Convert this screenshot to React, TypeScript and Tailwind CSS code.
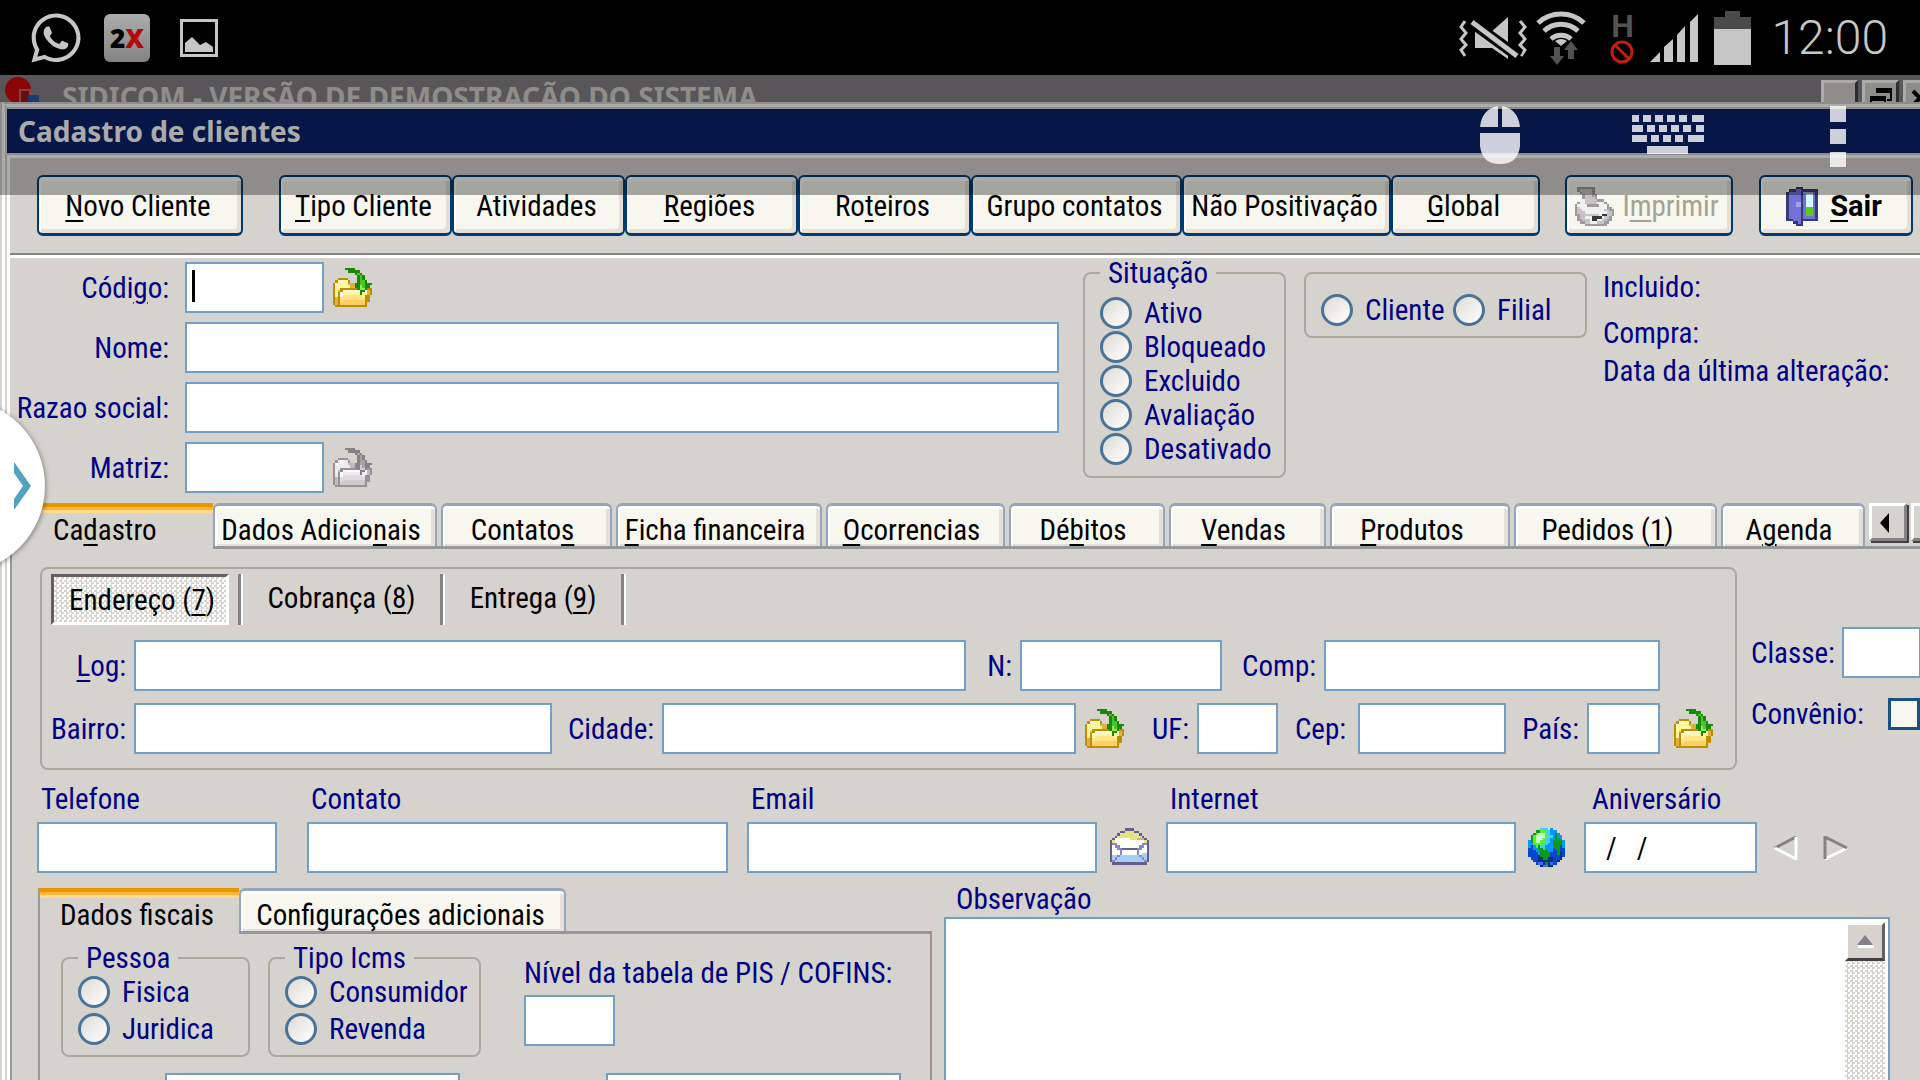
import type { ReactNode } from 'react';
import { FaWhatsapp } from 'react-icons/fa';

const navy = 'text-[#000084]';

const palettes: Record<string, Record<string, string>> = {
  folder: { B: '#bd8e00', y: '#fff79c', o: '#e0b040', w: '#fffbe7', Y: '#ffe384', O: '#ffcf63', G: '#188a08', g: '#4ac32a', L: '#8ceb5a' },
  folderGray: { B: '#949294', y: '#efebef', o: '#bdbabd', w: '#fffbff', Y: '#dedbde', O: '#cecbce', G: '#848284', g: '#a5a2a5', L: '#ceced6' },
  envelope: { P: '#63618c', y: '#e7e384', w: '#fffffa', r: '#d6ae8c', v: '#8c86c6', b: '#a5cff7' },
  globe: { c: '#42cff7', L: '#c6ffc6', G: '#5aef31', g: '#089a18', b: '#0896ef', B: '#0845ce', n: '#00308c', v: '#4a69ff' },
  printer: { s: '#9c9a9c', g: '#c6c3c6', w: '#efefef', k: '#393839' },
  door: { D: '#39387b', v: '#7371d6', c: '#d6fbff', w: '#a5a2e7', e: '#5acb21' },
};

const folderRows = [
  '.....GGGG.......',
  '......GGGGG.....',
  '.........GgG....',
  '..........GgG...',
  '..BBBB....GgG...',
  '.BywyyB...GggG..',
  'BwyyyyoooGGggGGG',
  'ByyyyyyooGGLgGG.',
  'ByyBBBBBBBGLLGBB',
  'ByoBwwwwwwwGGwoB',
  'ByBwyyyyyyyGyyoB',
  'ByBwYYYYYYYYyBB.',
  'BoBYYYYYYYYYYBB.',
  'BoBYOOOOOOOOOBB.',
  'BoBOOOOOOOOOOB..',
  '.BBBBBBBBBBBBB..',
];

const envelopeRows = [
  '......PPPP......',
  '....PPyyyyPP....',
  '...PyyyyyyyyP...',
  '..PyyyyyyyyyyP..',
  '.PwwwwwwyyyrrrP.',
  'PywwwwwwwwwwwwyP',
  'PvvwwwwwwwwwwvvP',
  'PwvvwwwwwwwwvvwP',
  'PwwvvPPPPPPvvwwP',
  'PwwwvwwwwwwvwwwP',
  'PwwwvwwwwwwvwbbP',
  'PbbvbbbbbbbbvbbP',
  'PbvbbbbbbbbbbvbP',
  'PvbbbbbbbbbbbbvP',
  '.PPPPPPPPPPPPPP.',
];

const globeRows = [
  '.....cccLb.....',
  '...ggGGccbbb...',
  '..gGLLLGcbbgb..',
  '.gGLLLLGccbgbb.',
  '.gGLLLGccbbggb.',
  'bgGLLGGccbggggb',
  'bbGGGGccbbggggb',
  'bBbGgccbbbgggBb',
  'BBbbggcbbbBggBB',
  'BBBbbgggbbBBgBB',
  'BBBBbggggBBBgnB',
  'BBBBnggggBBBBnB',
  '.BBBnnggnnBBBn.',
  '..BBnnnnnnBBn..',
  '...BvvngnvBB...',
  '.....nvvnn.....',
];

const printerRows = [
  '.sssssss........',
  '.sgggggs........',
  '..sggggs........',
  '...sgggss.......',
  '...sggggs.......',
  '..wwgggggsss....',
  '.swwgggggwwws...',
  'swwwwssssswwws..',
  'sgwwwwwwwwwwwss.',
  'sggwwwwwwwwwggss',
  'sgggwwwwwwwwwggs',
  'ssggggggggwkkggs',
  '.sggwwwkkkkwggs.',
  '.ssgggwkkwwggss.',
  '..ssggwwwgggss..',
  '....sssssssss...',
];

const doorRows = [
  '....DDD......',
  '.DDDvvDDDDDDD',
  'DvvvvvDwwwwvD',
  'DvvvvvDvcccvD',
  'DvvvvvDvcccvD',
  'DvvvvvDvcccvD',
  'DvvvwwDvcccvD',
  'DvvvwwDvcccvD',
  'DvvvvvDveeevD',
  'DvvvvvDveeevD',
  'DvvvvvDveeevD',
  'DvvvvvDveeevD',
  'DvvvvvDvvvvvD',
  'DDDvvvDDDDDDD',
  '...DDvD......',
  '....DDD......',
];

function PixelIcon({ rows, palette, className }: { rows: string[]; palette: string; className: string }) {
  return (
    <svg viewBox={`0 0 ${rows[0].length} ${rows.length}`} className={className} shapeRendering="crispEdges" aria-hidden="true">
      {rows.map((row, y) =>
        row.split('').map((c, x) =>
          c === '.' ? null : <rect key={`${x}-${y}`} x={x} y={y} width="1" height="1" fill={palettes[palette][c]} />
        )
      )}
    </svg>
  );
}

/** Text with one letter marked as its keyboard shortcut: "&Novo" underlines the N. */
function Mnemonic({ text }: { text: string }) {
  const i = text.indexOf('&');
  if (i < 0) return <span>{text}</span>;
  return (
    <span className="whitespace-pre">
      {text.slice(0, i)}
      <u className="decoration-2 underline-offset-4">{text[i + 1]}</u>
      {text.slice(i + 2)}
    </span>
  );
}

function TextInput({ id, className, value }: { id: string; className: string; value?: string }) {
  return (
    <input
      id={id}
      type="text"
      defaultValue={value}
      className={`h-[51px] min-w-0 border-2 border-[#739ec6] bg-white text-black outline-none ${className}`}
    />
  );
}

function Label({ htmlFor, className, text }: { htmlFor: string; className: string; text: string }) {
  return (
    <label htmlFor={htmlFor} className={`shrink-0 whitespace-nowrap ${navy} ${className}`}>
      <Mnemonic text={text} />
    </label>
  );
}

function FolderButton({ title, gray, className }: { title: string; gray?: boolean; className: string }) {
  return (
    <button type="button" aria-label={title} disabled={gray} className={`shrink-0 ${className}`}>
      <PixelIcon rows={folderRows} palette={gray ? 'folderGray' : 'folder'} className="size-[39px]" />
    </button>
  );
}

function Radio({ name, text, className }: { name: string; text: string; className: string }) {
  return (
    <label className={`flex items-center gap-3 whitespace-nowrap ${navy} ${className}`}>
      <input
        type="radio"
        name={name}
        className="size-8 shrink-0 appearance-none rounded-full border-3 border-[#4a7399] bg-linear-to-br from-[#dedbd6] to-white"
      />
      {text}
    </label>
  );
}

function Group({ title, className, children }: { title?: string; className: string; children: ReactNode }) {
  return (
    <fieldset className={`rounded-lg border-2 border-[#ada99a] ${className}`}>
      {title && <legend className={`px-2 ${navy}`}>{title}</legend>}
      {children}
    </fieldset>
  );
}

function ToolButton({ className, disabled, children }: { className: string; disabled?: boolean; children: ReactNode }) {
  return (
    <button
      type="button"
      disabled={disabled}
      className={`flex h-[61px] shrink-0 items-center justify-center rounded-md border-x-2 border-t-2 border-b-3 border-[#003c74] bg-[#f7f7ef] pt-[2px] pr-1 text-black shadow-[inset_2px_4px_0_#fff,inset_-4px_-4px_0_#e7dfd6] disabled:text-[#a5a294] ${className}`}
    >
      {children}
    </button>
  );
}

function Tab({ text, className }: { text: string; className: string }) {
  return (
    <button
      type="button"
      role="tab"
      aria-selected={false}
      className={`h-[43px] shrink-0 rounded-t-md border-x-2 border-t-3 border-[#94a6bd] bg-[#f7f7ef] pt-2 text-black shadow-[inset_2px_3px_0_#fff,inset_-4px_-2px_0_#e7dfd6] ${className}`}
    >
      <Mnemonic text={text} />
    </button>
  );
}

function ActiveTab({ text, className }: { text: string; className: string }) {
  return (
    <button
      type="button"
      role="tab"
      aria-selected={true}
      className={`h-[46px] shrink-0 border-t-4 border-t-[#e79600] pt-1 text-left text-black shadow-[inset_0_3px_0_#ffb638,inset_0_6px_0_#ffdb8c] ${className}`}
    >
      <Mnemonic text={text} />
    </button>
  );
}

function StatusBar() {
  return (
    <header className="flex h-[75px] shrink-0 items-center bg-black pr-8 pl-7 text-[#c6c6c6]">
      <FaWhatsapp className="size-14" />
      <div className="ml-5 flex h-12 w-[46px] items-center justify-center rounded-md bg-linear-to-b from-[#adadad] to-[#848284] font-['Noto_Sans'] text-[26px] leading-none font-black">
        <span className="text-black">2</span>
        <span className="text-[#b50808]">X</span>
      </div>
      <svg viewBox="0 0 38 38" className="ml-[30px] size-[38px]" aria-hidden="true">
        <rect x="1.5" y="1.5" width="35" height="35" fill="none" stroke="#c6c6c6" strokeWidth="3" />
        <path d="M5 33V24l7-6 8 8 6-3 7 5v5z" fill="#c6c6c6" />
      </svg>
      <svg viewBox="0 0 69 44" className="ml-auto h-11 w-[69px]" aria-hidden="true">
        <g fill="none" stroke="#c6c6c6" strokeWidth="3">
          <path d="M6 5L2 11l5 6-5 6 5 6-5 5 4 6" />
          <path d="M61 5l5 6-5 6 5 6-5 6 5 5-4 6" />
        </g>
        <path d="M31 17l18-16v42L33 32H16V14z" fill="#c6c6c6" />
        <path d="M12 6l48 35" stroke="#000" strokeWidth="11" />
        <path d="M13 6l45 34" stroke="#c6c6c6" strokeWidth="5" />
      </svg>
      <svg viewBox="0 0 50 54" className="ml-2 h-[54px] w-[50px]" aria-hidden="true">
        <g fill="none" stroke="#c6c6c6" strokeWidth="5">
          <path d="M2 12a34 34 0 0 1 46 0" />
          <path d="M8 20a25 25 0 0 1 34 0" />
          <path d="M15 28a15 15 0 0 1 20 0" />
        </g>
        <path d="M19 30q6-4 12 0l-6 5z" fill="#c6c6c6" />
        <path d="M18 36h6v9h4l-7 9-7-9h4zM32 48h6v-9h4l-7-9-7 9h4z" fill="#525252" />
      </svg>
      <div className="ml-6 flex w-6 flex-col items-center">
        <span className="font-['Roboto'] text-[32px] leading-7 font-bold text-[#525252]">H</span>
        <svg viewBox="0 0 24 24" className="size-6" aria-hidden="true">
          <circle cx="12" cy="12" r="10" fill="none" stroke="#bd2010" strokeWidth="3" />
          <path d="M5 5l14 14" stroke="#bd2010" strokeWidth="3" />
        </svg>
      </div>
      <svg viewBox="0 0 48 48" className="ml-4 size-12" aria-hidden="true">
        <path d="M0 48l10-10v10zM14 33l9-8v23h-9zM27 21l8-9v36h-8zM40 8l8-8v48h-8z" fill="#c6c6c6" />
      </svg>
      <svg viewBox="0 0 37 54" className="ml-4 h-[54px] w-[37px]" aria-hidden="true">
        <path d="M11 0h15v6h11v12H0V6h11z" fill="#4a4a4a" />
        <path d="M0 18h37v36H0z" fill="#c6c6c6" />
      </svg>
      <span className="ml-5 font-['Roboto'] text-[48px] leading-none font-light">12:00</span>
    </header>
  );
}

function RemoteToolbar() {
  return (
    <div className="absolute inset-x-0 top-0 flex h-[120px] items-start justify-end bg-black/33 pt-[31px] pr-[74px]">
      <button type="button" aria-label="Mouse" className="mr-28">
        <svg viewBox="0 0 40 58" className="h-[58px] w-10 fill-white/80">
          <path d="M18 0v21H0Q2 3 18 0zM22 0v21h18Q38 3 22 0zM0 27h40v13q-2 18-20 18T0 40z" />
        </svg>
      </button>
      <button type="button" aria-label="Teclado" className="mt-[9px] mr-[126px]">
        <svg viewBox="0 0 72 39" className="h-[39px] w-[72px] fill-white/80">
          <path d="M0 0h7v7H0zM11 0h8v7h-8zM23 0h8v7h-8zM35 0h8v7h-8zM47 0h8v7h-8zM60 0h12v7H60zM0 10h11v7H0zM15 10h8v7h-8zM27 10h8v7h-8zM39 10h8v7h-8zM51 10h8v7h-8zM64 10h8v7h-8zM0 20h15v7H0zM19 20h8v7h-8zM31 20h8v7h-8zM43 20h8v7h-8zM56 20h16v7H56zM15 31h41v8H15z" />
        </svg>
      </button>
      <button type="button" aria-label="Mais opções">
        <svg viewBox="0 0 16 61" className="h-[61px] w-4 fill-white/80">
          <path d="M0 0h16v16H0zM0 23h16v15H0zM0 46h16v15H0z" />
        </svg>
      </button>
    </div>
  );
}

function AppTitle() {
  const button = 'h-9 w-[37px] shrink-0 border-t-3 border-r-3 border-l-3 border-t-white border-r-[#424142] border-l-white bg-[#d6d3ce]';
  return (
    <div className="flex h-[27px] shrink-0 items-start overflow-hidden bg-[#858185]">
      <svg viewBox="0 0 36 36" className="mt-px ml-1 size-9 shrink-0" aria-hidden="true">
        <circle cx="14" cy="14" r="13" fill="#ce0808" />
        <path d="M16 14h10v14H16z" fill="#9c1818" stroke="#ffffff55" strokeWidth="2" />
        <path d="M24 19h11v10H24z" fill="#2959a5" />
      </svg>
      <h1 className="ml-[22px] pt-1 font-['Noto_Sans'] text-[28px] leading-9 font-bold whitespace-nowrap text-[#d6d3ce]">
        SIDICOM - VERSÃO DE DEMOSTRAÇÃO DO SISTEMA
      </h1>
      <div className="mt-[5px] -mr-5 ml-auto flex gap-1">
        <button type="button" aria-label="Minimizar" className={button} />
        <button type="button" aria-label="Restaurar" className={button}>
          <svg viewBox="0 0 31 30" className="h-[30px]" aria-hidden="true">
            <path d="M12 4h14v11h-4M6 12h14v12H6z" fill="none" stroke="#000" strokeWidth="2" />
            <path d="M11 3h16v5H11zM5 11h16v5H5z" />
          </svg>
        </button>
        <button type="button" aria-label="Fechar" className={button}>
          <svg viewBox="0 0 31 30" className="h-[30px]" aria-hidden="true">
            <path d="M7 6l14 14M21 6L7 20" stroke="#000" strokeWidth="4" />
          </svg>
        </button>
      </div>
    </div>
  );
}

function Toolbar() {
  return (
    <div className="flex h-[100px] shrink-0 items-start border-b-3 border-b-white pt-[17px] pl-[27px] shadow-[inset_0_-2px_0_#848284]">
      <ToolButton className="mr-9 w-[206px]"><Mnemonic text="&Novo Cliente" /></ToolButton>
      <ToolButton className="w-[173px]"><Mnemonic text="&Tipo Cliente" /></ToolButton>
      <ToolButton className="w-[173px]"><Mnemonic text="Atividades" /></ToolButton>
      <ToolButton className="w-[173px]"><Mnemonic text="&Regiões" /></ToolButton>
      <ToolButton className="w-[173px]"><Mnemonic text="Ro&teiros" /></ToolButton>
      <ToolButton className="w-[211px]"><Mnemonic text="Grupo contatos" /></ToolButton>
      <ToolButton className="w-[209px]"><Mnemonic text="Não Positivação" /></ToolButton>
      <ToolButton className="w-[149px]"><Mnemonic text="&Global" /></ToolButton>
      <ToolButton disabled className="ml-[25px] w-[168px] gap-2">
        <PixelIcon rows={printerRows} palette="printer" className="size-[39px]" />
        <Mnemonic text="I&mprimir" />
      </ToolButton>
      <ToolButton className="ml-[26px] w-[154px] gap-3 font-['Roboto'] font-bold">
        <PixelIcon rows={doorRows} palette="door" className="h-[39px] w-8" />
        <Mnemonic text="&Sair" />
      </ToolButton>
    </div>
  );
}

function Identification() {
  const label = 'w-[175px] pr-4 text-right';
  return (
    <section className="flex h-[245px] shrink-0">
      <div className="flex min-w-0 flex-1 flex-col gap-[9px] pt-1">
        <div className="flex items-center">
          <Label htmlFor="codigo" text="Códi&go:" className={label} />
          <div className="relative">
            <TextInput id="codigo" className="w-[139px] px-4" />
            <span className="absolute top-2 left-[7px] h-8 w-[3px] bg-black" />
          </div>
          <FolderButton title="Abrir cliente" className="ml-[9px]" />
        </div>
        <div className="flex items-center">
          <Label htmlFor="nome" text="Nome:" className={label} />
          <TextInput id="nome" className="flex-1 px-2" />
        </div>
        <div className="flex items-center">
          <Label htmlFor="razao" text="Razao social:" className={label} />
          <TextInput id="razao" className="flex-1 px-2" />
        </div>
        <div className="flex items-center">
          <Label htmlFor="matriz" text="Matriz:" className={label} />
          <TextInput id="matriz" className="w-[139px] px-2" />
          <FolderButton title="Abrir matriz" gray className="ml-[9px]" />
        </div>
      </div>
      <Group title="Situação" className="ml-6 h-[220px] w-[203px] shrink-0 pl-[15px]">
        <div className="pt-2">
          {['Ativo', 'Bloqueado', 'Excluido', 'Avaliação', 'Desativado'].map((s) => (
            <Radio key={s} name="situacao" text={s} className="h-[34px]" />
          ))}
        </div>
      </Group>
      <Group className="mt-[14px] ml-[18px] h-[66px] w-[283px] shrink-0 pl-[15px]">
        <div className="flex gap-2 pt-5">
          <Radio name="tipo" text="Cliente" className="w-[124px]" />
          <Radio name="tipo" text="Filial" className="" />
        </div>
      </Group>
      <div className={`ml-4 w-[317px] shrink-0 pt-[14px] whitespace-nowrap ${navy}`}>
        <p className="mb-4">Incluido:</p>
        <p className="mb-2">Compra:</p>
        <p>Data da última alteração:</p>
      </div>
    </section>
  );
}

function MainTabs() {
  const scroll = 'h-[38px] w-[38px] shrink-0 border-3 border-t-white border-r-[#848284] border-b-[#848284] border-l-white bg-[#d6d3ce] shadow-[2px_2px_0_#424142]';
  return (
    <div role="tablist" className="flex shrink-0 overflow-hidden">
      <ActiveTab text="Ca&dastro" className="w-[203px] pl-[43px]" />
      <div className="flex min-w-0 flex-1 gap-1 border-b-3 border-[#949a9c]">
        <Tab text="Dados Adicio&nais" className="w-[224px] pr-2" />
        <Tab text="Contato&s" className="w-[171px] pr-2" />
        <Tab text="&Ficha financeira" className="w-[206px] pr-2" />
        <Tab text="&Ocorrencias" className="w-[179px] pr-2" />
        <Tab text="Dé&bitos" className="w-[156px] pr-2" />
        <Tab text="&Vendas" className="w-[157px] pr-2" />
        <Tab text="&Produtos" className="w-[180px] pr-4" />
        <Tab text="Pedidos (&1)" className="w-[203px] pr-4" />
        <Tab text="A&genda" className="w-[144px] pr-2" />
        <button type="button" aria-label="Abas anteriores" className={scroll}>
          <svg viewBox="0 0 32 32" className="size-8" aria-hidden="true"><path d="M17 7v20L8 17z" /></svg>
        </button>
        <button type="button" aria-label="Próximas abas" className={scroll} />
      </div>
    </div>
  );
}

function Address() {
  const divider = 'h-[51px] w-[5px] shrink-0 border-r-2 border-l-3 border-r-white border-l-[#848284]';
  return (
    <div className="flex shrink-0 overflow-hidden pt-[18px] pl-7">
      <Group className="min-w-0 flex-1 pt-[5px] pb-[14px]">
        <div className="flex items-center pl-[9px] text-black">
          <button
            type="button"
            aria-pressed="true"
            className="h-[51px] w-[178px] border-3 border-t-[#63615f] border-r-white border-b-white border-l-[#63615f] bg-[repeating-conic-gradient(#d6d3ce_0_25%,#fff_0_50%)] bg-[length:5px_5px] pl-1"
          >
            <Mnemonic text="Endereço (&7)" />
          </button>
          <span className={`ml-[9px] ${divider}`} />
          <button type="button" className="w-[197px] pb-1"><Mnemonic text="Cobrança (&8)" /></button>
          <span className={divider} />
          <button type="button" className="w-44 pb-1"><Mnemonic text="Entrega (&9)" /></button>
          <span className={divider} />
        </div>
        <div className="mt-[15px] flex items-center pr-[75px]">
          <Label htmlFor="log" text="&Log:" className="w-[92px] pr-2 text-right" />
          <TextInput id="log" className="flex-1 px-2" />
          <Label htmlFor="numero" text="N:" className="w-[54px] pr-2 text-right" />
          <TextInput id="numero" className="w-[202px] px-2" />
          <Label htmlFor="comp" text="Comp:" className="w-[102px] pr-2 text-right" />
          <TextInput id="comp" className="w-[336px] px-2" />
        </div>
        <div className="mt-3 flex items-center pr-[22px]">
          <Label htmlFor="bairro" text="Bairro:" className="w-[92px] pr-2 text-right" />
          <TextInput id="bairro" className="w-[418px] px-2" />
          <Label htmlFor="cidade" text="Cidade:" className="w-[110px] pr-2 text-right" />
          <TextInput id="cidade" className="flex-1 px-2" />
          <FolderButton title="Abrir cidade" className="ml-[9px]" />
          <Label htmlFor="uf" text="UF:" className="w-[73px] pr-2 text-right" />
          <TextInput id="uf" className="w-[81px] px-2" />
          <Label htmlFor="cep" text="Cep:" className="w-20 pr-3 text-right" />
          <TextInput id="cep" className="w-[148px] px-2" />
          <Label htmlFor="pais" text="País:" className="w-[81px] pr-2 text-right" />
          <TextInput id="pais" className="w-[73px] px-2" />
          <FolderButton title="Abrir país" className="ml-[14px]" />
        </div>
      </Group>
      <div className="w-[183px] shrink-0 pt-[60px] pl-[14px]">
        <div className="flex items-center">
          <Label htmlFor="classe" text="Classe:" className="w-[91px]" />
          <TextInput id="classe" className="w-[79px] shrink-0 px-2" />
        </div>
        <div className="mt-5 flex items-center">
          <Label htmlFor="convenio" text="Convênio:" className="w-[137px]" />
          <input id="convenio" type="checkbox" className="h-8 w-8 shrink-0 appearance-none border-3 border-[#185184] bg-[#f7f7ef]" />
        </div>
      </div>
    </div>
  );
}

function Contact() {
  return (
    <div className="flex shrink-0 items-end pt-[14px] pr-[71px] pl-[25px]">
      <div className="flex w-60 flex-col gap-2">
        <Label htmlFor="telefone" text="Telefone" className="pl-1" />
        <TextInput id="telefone" className="px-2" />
      </div>
      <div className="ml-[30px] flex min-w-0 flex-1 flex-col gap-2">
        <Label htmlFor="contato" text="Contato" className="pl-1" />
        <TextInput id="contato" className="px-2" />
      </div>
      <div className="ml-[19px] flex w-[350px] flex-col gap-2">
        <Label htmlFor="email" text="Email" className="pl-1" />
        <TextInput id="email" className="px-2" />
      </div>
      <button type="button" aria-label="Enviar email" className="mb-2 ml-[13px]">
        <PixelIcon rows={envelopeRows} palette="envelope" className="h-[37px] w-[39px]" />
      </button>
      <div className="ml-[17px] flex w-[350px] flex-col gap-2">
        <Label htmlFor="internet" text="Internet" className="pl-1" />
        <TextInput id="internet" className="px-2" />
      </div>
      <button type="button" aria-label="Abrir site" className="mb-[6px] ml-3">
        <PixelIcon rows={globeRows} palette="globe" className="h-[39px] w-[37px]" />
      </button>
      <div className="ml-[19px] flex w-[173px] flex-col gap-2">
        <Label htmlFor="aniversario" text="Aniversário" className="pl-2" />
        <TextInput id="aniversario" value="/   /" className="px-5" />
      </div>
      <div className="mb-[13px] ml-4 flex gap-6">
        <button type="button" aria-label="Anterior">
          <svg viewBox="0 0 26 24" className="h-6 w-[26px]" fill="none" strokeWidth="3">
            <path d="M23 1L2 12" stroke="#848284" />
            <path d="M2 12l21 11V1" stroke="#fff" />
          </svg>
        </button>
        <button type="button" aria-label="Próximo">
          <svg viewBox="0 0 26 24" className="h-6 w-[26px]" fill="none" strokeWidth="3">
            <path d="M24 12L2 23" stroke="#fff" />
            <path d="M2 23V1l22 11" stroke="#848284" />
          </svg>
        </button>
      </div>
    </div>
  );
}

function FiscalData() {
  return (
    <div className="flex w-[894px] shrink-0 flex-col pt-[15px]">
      <div role="tablist" className="flex">
        <ActiveTab text="Dados fiscais" className="w-[201px] border-l-2 border-l-[#949a9c] pl-5" />
        <div className="min-w-0 flex-1 border-b-3 border-[#949a9c]">
          <Tab text="Configurações adicionais" className="w-[327px] pr-1" />
        </div>
      </div>
      <div className="flex-1 border-x-2 border-[#949a9c] pt-[9px] pl-[21px]">
        <div className="flex">
          <Group title="Pessoa" className="h-[114px] w-[189px] pl-[15px]">
            <Radio name="pessoa" text="Fisica" className="h-[37px]" />
            <Radio name="pessoa" text="Juridica" className="h-[37px]" />
          </Group>
          <Group title="Tipo Icms" className="ml-[18px] h-[114px] w-[213px] pl-[15px]">
            <Radio name="icms" text="Consumidor" className="h-[37px]" />
            <Radio name="icms" text="Revenda" className="h-[37px]" />
          </Group>
          <div className="ml-[43px] flex flex-col gap-[7px] pt-[15px]">
            <Label htmlFor="nivel" text="Nível da tabela de PIS / COFINS:" className="" />
            <TextInput id="nivel" className="w-[91px] px-2" />
          </div>
        </div>
        <div className="mt-4 flex gap-[146px] pl-[104px]">
          <TextInput id="fiscal-1" className="w-[295px] px-2" />
          <TextInput id="fiscal-2" className="w-[295px] px-2" />
        </div>
      </div>
    </div>
  );
}

function Notes() {
  return (
    <div className="mr-[30px] ml-3 -mb-1 flex min-w-0 flex-1 flex-col pt-[11px]">
      <Label htmlFor="observacao" text="Observação" className="pl-3" />
      <div className="mt-[3px] flex flex-1 border-2 border-[#739ec6] bg-white">
        <textarea id="observacao" className="min-w-0 flex-1 resize-none bg-white p-2 text-black outline-none" />
        <div className="mt-[3px] mr-[3px] w-10 shrink-0 bg-[repeating-conic-gradient(#d6d3ce_0_25%,#fff_0_50%)] bg-[length:5px_5px]">
          <button
            type="button"
            aria-label="Rolar para cima"
            className="flex h-[39px] w-full items-center justify-center border-3 border-t-white border-r-[#636163] border-b-[#424142] border-l-white bg-[#d6d3ce]"
          >
            <svg viewBox="0 0 18 14" className="h-[14px] w-[18px]" aria-hidden="true">
              <path d="M9 0l8 10H1z" fill="#848284" />
              <path d="M2 10h16v3H2z" fill="#fff" />
            </svg>
          </button>
        </div>
      </div>
    </div>
  );
}

export default function App() {
  return (
    <div className="flex h-screen flex-col overflow-hidden bg-[#d6d3ce] font-['Roboto_Condensed','Roboto',sans-serif] text-[29px] leading-[30px]">
      <StatusBar />
      <div className="relative flex min-h-0 flex-1 flex-col">
        <AppTitle />
        <div className="flex min-h-0 flex-1 flex-col border-l-2 border-[#d6d3ce]">
          <div className="flex min-h-0 flex-1 flex-col border-t-2 border-l-3 border-t-[#d6d3ce] border-l-white">
            <div className="flex min-h-0 flex-1 flex-col border-t-3 border-l-2 border-t-white border-l-[#d6d3ce] pt-[2px]">
              <h2 className="h-11 shrink-0 bg-[#08226a] pl-[11px] font-['Noto_Sans'] text-[28px] leading-[44px] font-bold text-white">
                Cadastro de clientes
              </h2>
              <main className="mt-[2px] flex min-h-0 flex-1 flex-col border-t-3 border-l-3 border-white">
                <Toolbar />
                <Identification />
                <MainTabs />
                <div className="flex min-h-0 flex-1 flex-col overflow-hidden border-l-2 border-[#949a9c]">
                  <Address />
                  <Contact />
                  <div className="flex min-h-0 flex-1 pl-[26px]">
                    <FiscalData />
                    <Notes />
                  </div>
                </div>
              </main>
            </div>
          </div>
        </div>
        <RemoteToolbar />
        <button
          type="button"
          aria-label="Abrir painel"
          className="absolute top-[324px] -left-[129px] flex size-[174px] items-center justify-end rounded-full bg-white pr-[14px] shadow-[1px_1px_5px_#00000066]"
        >
          <svg viewBox="0 0 17 48" className="h-12 w-[17px]" aria-hidden="true">
            <path d="M0 0l17 24L0 48V37l9-13L0 11z" fill="#52a2bd" />
          </svg>
        </button>
      </div>
    </div>
  );
}
